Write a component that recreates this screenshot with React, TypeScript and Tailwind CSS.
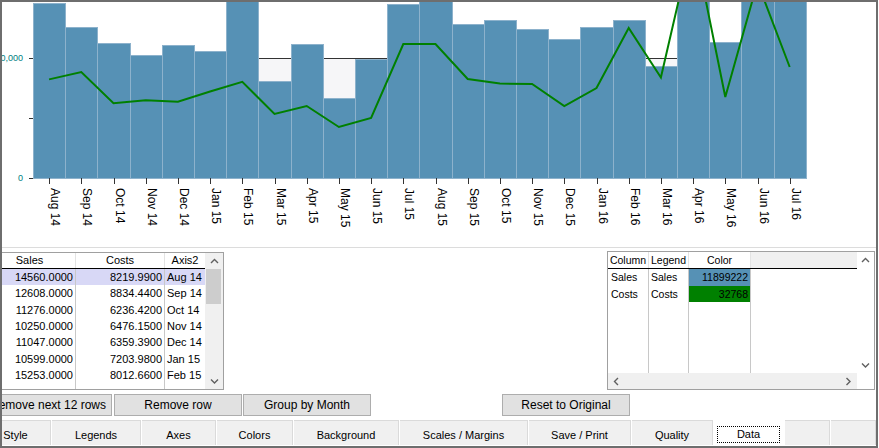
import React from 'react';

const months = [
  'Aug 14', 'Sep 14', 'Oct 14', 'Nov 14', 'Dec 14', 'Jan 15', 'Feb 15', 'Mar 15',
  'Apr 15', 'May 15', 'Jun 15', 'Jul 15', 'Aug 15', 'Sep 15', 'Oct 15', 'Nov 15',
  'Dec 15', 'Jan 16', 'Feb 16', 'Mar 16', 'Apr 16', 'May 16', 'Jun 16', 'Jul 16',
];
const sales = [
  14560, 12608, 11276, 10250, 11047, 10599, 15253, 8083, 11167, 6667, 9958, 14540,
  14750, 12875, 13167, 12417, 11583, 12600, 13167, 9333, 16500, 11300, 15500, 15200,
];
const costs = [
  8219.99, 8834.44, 6236.42, 6476.15, 6359.39, 7203.98, 8012.66, 5333, 6000, 4250, 5000, 11167,
  11167, 8250, 7875, 7833, 6000, 7500, 12500, 8375, 20000, 6750, 16300, 9250,
];

// plot geometry (page pixels)
const X0 = 33;
const BW = 32.2;
const BASE = 178;
const K = 0.012;
const yOf = (v: number) => BASE - v * K;
const edge = (i: number) => Math.round(X0 + i * BW);
const mid = (i: number) => X0 + i * BW + BW / 2;

function Chart() {
  const right = edge(24);
  return (
    <svg
      width={874}
      height={245}
      viewBox="2 2 874 245"
      className="block"
      fontFamily="'Liberation Sans', Arial, sans-serif"
    >
      <rect x={X0} y={58} width={right - X0} height={BASE - 58} fill="#f6f6f8" />
      <line x1={X0} x2={right} y1={58.5} y2={58.5} stroke="#333" />
      {sales.map((s, i) => {
        const top = Math.round(yOf(s));
        const x = edge(i);
        return (
          <rect
            key={i}
            x={x + 0.5}
            y={top + 0.5}
            width={edge(i + 1) - x}
            height={BASE - top}
            fill="#5691b5"
            stroke="#8db2cc"
            strokeWidth={1}
            shapeRendering="crispEdges"
          />
        );
      })}
      <polyline
        points={costs.map((c, i) => `${mid(i)},${yOf(c)}`).join(' ')}
        fill="none"
        stroke="#008000"
        strokeWidth={2}
      />
      {[58, 118, 178].map((y) => (
        <line key={y} x1={29} x2={33} y1={y + 0.5} y2={y + 0.5} stroke="#333" />
      ))}
      <text x={23} y={61} fontSize={9} fill="#008080" textAnchor="end">10,000</text>
      <text x={23} y={181} fontSize={9} fill="#008080" textAnchor="end">0</text>
      {months.map((m, i) => {
        const cx = Math.round(mid(i));
        return (
          <g key={m}>
            <line x1={cx + 0.5} x2={cx + 0.5} y1={178} y2={184} stroke="#333" />
            <text transform={`translate(${cx + 2},188) rotate(90)`} fontSize={12} fill="#000">
              {m}
            </text>
          </g>
        );
      })}
    </svg>
  );
}

function Chevron({ dir }: { dir: 'up' | 'down' | 'left' | 'right' }) {
  const pts = {
    up: '1,5 4.5,1.5 8,5',
    down: '1,1.5 4.5,5 8,1.5',
    left: '5,1 1.5,4.5 5,8',
    right: '1.5,1 5,4.5 1.5,8',
  }[dir];
  const vertical = dir === 'up' || dir === 'down';
  return (
    <svg width={vertical ? 9 : 7} height={vertical ? 7 : 9}>
      <polyline points={pts} fill="none" stroke="#606060" strokeWidth={1.4} />
    </svg>
  );
}

const dataRows = [
  ['14560.0000', '8219.9900', 'Aug 14'],
  ['12608.0000', '8834.4400', 'Sep 14'],
  ['11276.0000', '6236.4200', 'Oct 14'],
  ['10250.0000', '6476.1500', 'Nov 14'],
  ['11047.0000', '6359.3900', 'Dec 14'],
  ['10599.0000', '7203.9800', 'Jan 15'],
  ['15253.0000', '8012.6600', 'Feb 15'],
];

function DataGrid() {
  const cols = [
    { title: 'Sales', w: 'w-[92px] border-r', align: 'text-right pr-[2px]' },
    { title: 'Costs', w: 'w-[89px] border-r', align: 'text-right pr-[2px]' },
    { title: 'Axis2', w: 'w-[40px]', align: 'text-left pl-[2px]' },
  ];
  return (
    <div className="-ml-[19px] mt-[4px] h-[138px] w-[241px] border border-[#a0a0a0] flex text-[11px] text-black">
      <div className="w-[221px] flex flex-col">
        <div className="flex h-[15px]">
          {cols.map((c) => (
            <div key={c.title} className={`${c.w} border-[#e3e3e3] text-center leading-[15px]`}>
              {c.title}
            </div>
          ))}
        </div>
        <div className="h-px bg-black" />
        <div className="flex flex-1">
          {cols.map((c, ci) => (
            <div key={c.title} className={`${c.w} border-[#c8c8c8] flex flex-col`}>
              {dataRows.map((r, ri) => (
                <div
                  key={ri}
                  className={`h-[16.33px] leading-[16px] ${c.align} ${ri === 0 ? 'bg-[#d8d8f6]' : ''}`}
                >
                  {r[ci]}
                </div>
              ))}
            </div>
          ))}
        </div>
      </div>
      <div className="w-[18px] bg-[#f0f0f0] flex flex-col">
        <div className="h-[16px] flex items-center justify-center">
          <Chevron dir="up" />
        </div>
        <div className="h-[35px] ml-px mr-[2px] bg-[#cdcdcd]" />
        <div className="flex-1" />
        <div className="h-[16px] flex items-center justify-center">
          <Chevron dir="down" />
        </div>
      </div>
    </div>
  );
}

const legendRows = [
  { col: 'Sales', legend: 'Sales', color: '11899222', bg: 'bg-[#5691b5]' },
  { col: 'Costs', legend: 'Costs', color: '32768', bg: 'bg-[#008000]' },
];

function LegendGrid() {
  return (
    <div className="ml-[383px] mt-[3px] h-[139px] w-[268px] border border-[#a0a0a0] flex flex-col text-[10.5px] text-black">
      <div className="flex h-[121px]">
        <div className="w-[249px] flex flex-col">
          <div className="flex h-[16px] leading-[16px]">
            <div className="w-[41px] border-r border-[#e3e3e3] text-center">Column</div>
            <div className="w-[40px] border-r border-[#e3e3e3] text-center">Legend</div>
            <div className="w-[62px] border-r border-[#e3e3e3] text-center">Color</div>
            <div className="flex-1 bg-[#f0f0f0]" />
          </div>
          <div className="h-px bg-black" />
          <div className="flex flex-1">
            <div className="w-[41px] border-r border-[#c8c8c8]">
              {legendRows.map((r) => (
                <div key={r.col} className="h-[16.5px] leading-[16.5px] pl-[3px]">{r.col}</div>
              ))}
            </div>
            <div className="w-[40px] border-r border-[#c8c8c8]">
              {legendRows.map((r) => (
                <div key={r.col} className="h-[16.5px] leading-[16.5px] pl-[2px]">{r.legend}</div>
              ))}
            </div>
            <div className="w-[62px] border-r border-[#c8c8c8]">
              {legendRows.map((r) => (
                <div key={r.col} className={`h-[16.5px] leading-[16.5px] pr-[2px] text-right ${r.bg}`}>
                  {r.color}
                </div>
              ))}
            </div>
            <div className="flex-1" />
          </div>
        </div>
        <div className="w-[17px] flex flex-col justify-between">
          <div className="h-[16px] flex items-center justify-center">
            <Chevron dir="up" />
          </div>
          <div className="h-[16px] flex items-center justify-center">
            <Chevron dir="down" />
          </div>
        </div>
      </div>
      <div className="flex h-[16px]">
        <div className="w-[249px] bg-[#f0f0f0] flex justify-between">
          <div className="w-[17px] flex items-center justify-center">
            <Chevron dir="left" />
          </div>
          <div className="w-[17px] flex items-center justify-center">
            <Chevron dir="right" />
          </div>
        </div>
        <div className="w-[17px]" />
      </div>
    </div>
  );
}

function Button({ label, className }: { label: string; className: string }) {
  return (
    <button
      className={`${className} shrink-0 w-[128px] h-[22px] border border-[#adadad] bg-[#e1e1e1] text-[12px] leading-[20px] text-black whitespace-nowrap`}
    >
      {label}
    </button>
  );
}

const tabs = [
  { label: 'Style', w: 'w-[70px] -ml-[21px]' },
  { label: 'Legends', w: 'w-[89px]' },
  { label: 'Axes', w: 'w-[74px]' },
  { label: 'Colors', w: 'w-[76px]' },
  { label: 'Background', w: 'w-[105px]' },
  { label: 'Scales / Margins', w: 'w-[128px]' },
  { label: 'Save / Print', w: 'w-[102px]' },
  { label: 'Quality', w: 'w-[81px]' },
  { label: 'Data', w: 'w-[71px] -ml-px', active: true },
  { label: '', w: 'w-[45px]' },
  { label: '', w: 'w-[45px]' },
];

function TabStrip() {
  return (
    <div className="mt-[3px] h-[26px] flex items-end gap-px bg-white text-[11px] text-black">
      {tabs.map((t, i) =>
        t.active ? (
          <div key={i} className={`${t.w} shrink-0 h-[26px] bg-white pt-[7px] px-[4px]`}>
            <div className="h-[17px] border border-dotted border-black text-center leading-[14px]">
              {t.label}
            </div>
          </div>
        ) : (
          <div
            key={i}
            className={`${t.w} shrink-0 h-[25px] bg-[#f0f0f0] border-t border-r border-[#dadada] text-center pt-[8px] leading-[13px] whitespace-nowrap`}
          >
            {t.label}
          </div>
        ),
      )}
    </div>
  );
}

export default function App() {
  return (
    <div className="w-[879px] h-[448px] bg-white overflow-hidden font-['Liberation_Sans',Arial,sans-serif]">
      <div className="w-[878px] h-[448px] border-2 border-[#6e6e6e] flex flex-col overflow-hidden">
        <div className="h-[246px] border-b border-[#dcdcdc] shrink-0">
          <Chart />
        </div>
        <div className="h-[142px] flex shrink-0">
          <DataGrid />
          <LegendGrid />
        </div>
        <div className="mt-[4px] h-[22px] flex shrink-0">
          <Button label="Remove next 12 rows" className="-ml-[18px]" />
          <Button label="Remove row" className="ml-[2px]" />
          <Button label="Group by Month" className="ml-[1px]" />
          <Button label="Reset to Original" className="ml-[131px]" />
        </div>
        <TabStrip />
      </div>
    </div>
  );
}
